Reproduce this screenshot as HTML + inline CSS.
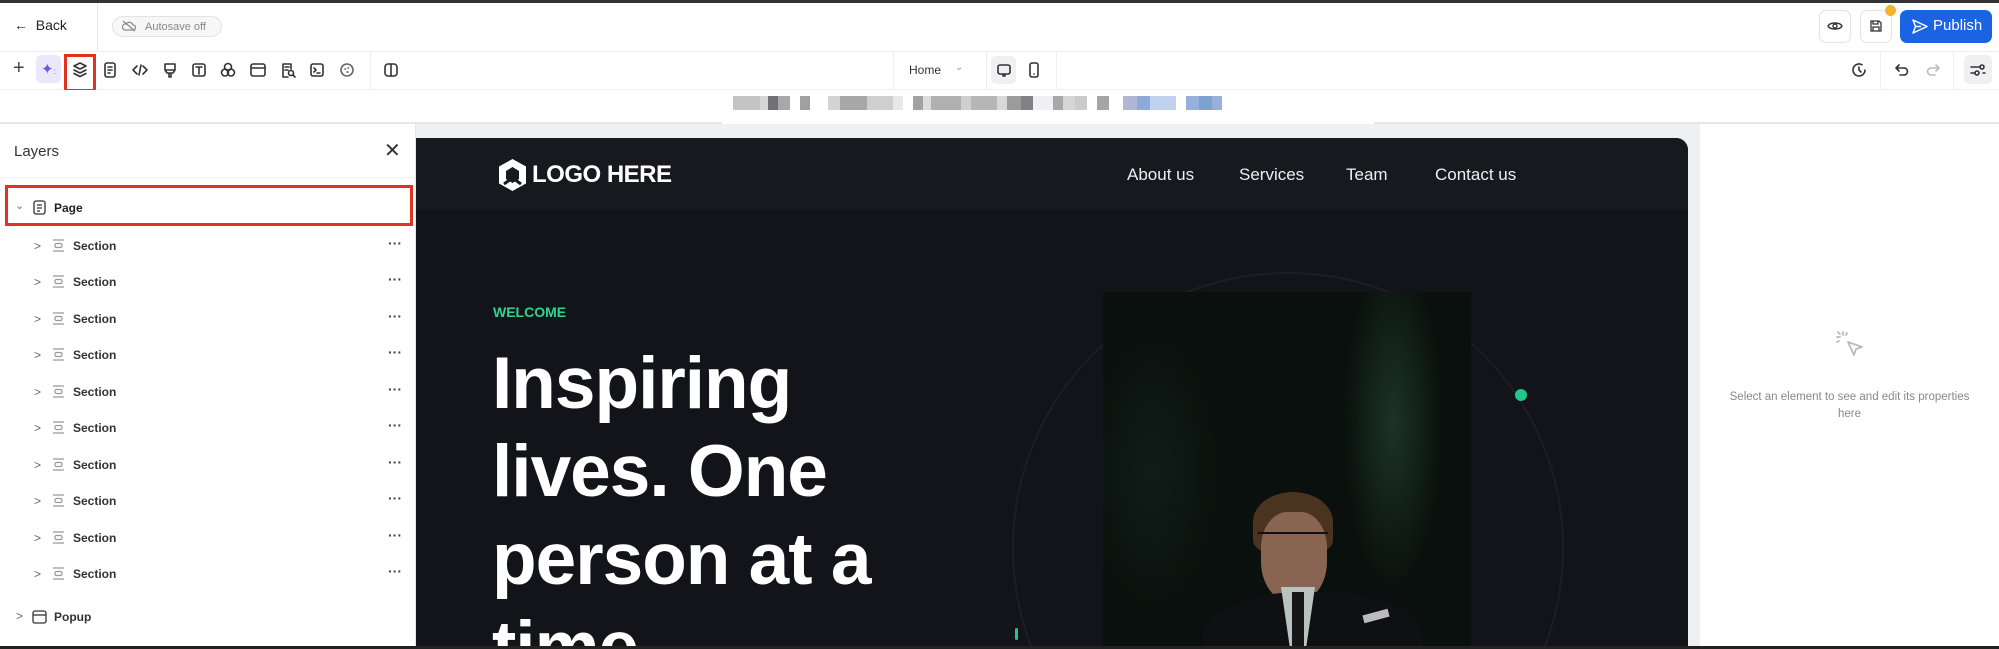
<!DOCTYPE html>
<html style="width:1999px;height:649px;overflow:hidden"><head><meta charset="utf-8"><style>
*{box-sizing:border-box;margin:0;padding:0}
body{width:1999px;height:649px;overflow:hidden;background:#fff;font-family:"Liberation Sans",sans-serif;position:relative;color:#222}
.abs{position:absolute}
.ic{position:absolute;width:18px;height:18px;top:61px}
.ic svg{width:18px;height:18px;fill:none;stroke:#333;stroke-width:1.6;stroke-linecap:round;stroke-linejoin:round}
.row{position:absolute;left:0;width:416px;height:36px;font-size:12px;font-weight:bold;color:#333}
.row .chev{position:absolute;left:34px;top:11px;color:#666;font-size:12px;font-weight:normal}
.row .si{position:absolute;left:52px;top:11px;width:13px;height:13px}
.row .t{position:absolute;left:73px;top:11px}
.row .dots{position:absolute;left:388px;top:7px;font-size:14px;color:#444}
.nav{position:absolute;top:165px;color:#eee;font-size:17px}
.hl{position:absolute;left:76px;color:#fff;font-weight:bold;font-size:73px;letter-spacing:-1px;white-space:nowrap}
</style></head><body>
<div class="abs" style="left:0;top:0;width:1999px;height:3px;background:#333"></div>
<div class="abs" style="left:14px;top:17px;font-size:14px;color:#222">&#8592;&nbsp; Back</div>
<div class="abs" style="left:97px;top:3px;width:1px;height:48px;background:#e6e6e6"></div>
<div class="abs" style="left:112px;top:16px;width:110px;height:21px;border:1px solid #e3e3e3;border-radius:11px;background:#f7f7f7;font-size:11px;color:#888;padding:4px 0 0 32px">Autosave off</div>
<svg class="abs" style="left:122px;top:20px" width="14" height="12" viewBox="0 0 14 12"><path d="M3 10h8a2.5 2.5 0 0 0 0-5 4 4 0 0 0-7-1A3 3 0 0 0 3 10zM1 1l12 10" fill="none" stroke="#888" stroke-width="1.2"/></svg>
<div class="abs" style="left:1819px;top:10px;width:32px;height:33px;border:1px solid #e3e3e3;border-radius:7px"></div>
<svg class="abs" style="left:1827px;top:19px" width="16" height="14" viewBox="0 0 16 14"><path d="M1 7c2-4 12-4 14 0c-2 4-12 4-14 0z" fill="none" stroke="#333" stroke-width="1.4"/><circle cx="8" cy="7" r="2" fill="none" stroke="#333" stroke-width="1.4"/></svg>
<div class="abs" style="left:1860px;top:10px;width:32px;height:33px;border:1px solid #e3e3e3;border-radius:7px"></div>
<svg class="abs" style="left:1869px;top:19px" width="14" height="14" viewBox="0 0 14 14"><path d="M2 2h8l2 2v8H2zM4 2v3h5V2M4 12V8h6v4" fill="none" stroke="#333" stroke-width="1.3"/></svg>
<div class="abs" style="left:1885px;top:5px;width:11px;height:11px;border-radius:50%;background:#f3b230"></div>
<div class="abs" style="left:1900px;top:10px;width:92px;height:33px;border-radius:7px;background:#1a63e3;color:#fff;font-size:15px;padding:7px 0 0 33px">Publish</div>
<svg class="abs" style="left:1911px;top:18px" width="18" height="17" viewBox="0 0 18 17"><path d="M2 2l14 6.5L2 15l2.5-6.5zM4.5 8.5H10" fill="none" stroke="#fff" stroke-width="1.5" stroke-linejoin="round"/></svg>
<div class="abs" style="left:0;top:51px;width:1999px;height:1px;background:#eee"></div>
<div class="abs" style="left:0;top:89px;width:1999px;height:1px;background:#eee"></div>
<div class="abs" style="left:13px;top:57px;font-size:20px;color:#444">+</div>
<div class="abs" style="left:36px;top:55px;width:25px;height:28px;border-radius:5px;background:#ece8fc;color:#7c4dea;font-size:15px;padding:5px 0 0 5px">&#10022;<span style="font-size:8px">:</span></div>
<div class="abs" style="left:64px;top:54px;width:32px;height:38px;border:3px solid #e0341e"></div>
<div class="ic" style="left:71px"><svg viewBox="0 0 18 18"><path d="M9 2l6 3-6 3-6-3zM3 9l6 3 6-3M3 12.5l6 3 6-3"/></svg></div>
<div class="ic" style="left:101px"><svg viewBox="0 0 18 18"><rect x="4" y="2" width="10" height="14" rx="2"/><path d="M7 6h4M7 9h4M7 12h2"/></svg></div>
<div class="ic" style="left:131px"><svg viewBox="0 0 18 18"><path d="M6 5l-4 4 4 4M12 5l4 4-4 4M10 4l-2 10"/></svg></div>
<div class="ic" style="left:161px"><svg viewBox="0 0 18 18"><path d="M4 3h10v6H4zM4 9l2 3h6l2-3M8 12v4h2v-4"/></svg></div>
<div class="ic" style="left:190px"><svg viewBox="0 0 18 18"><rect x="3" y="3" width="12" height="12" rx="2"/><path d="M6 6h6M9 6v7"/></svg></div>
<div class="ic" style="left:219px"><svg viewBox="0 0 18 18"><circle cx="9" cy="6" r="3.5"/><circle cx="6" cy="11.5" r="3.5"/><circle cx="12" cy="11.5" r="3.5"/></svg></div>
<div class="ic" style="left:249px"><svg viewBox="0 0 18 18"><rect x="2" y="3" width="14" height="12" rx="2"/><path d="M2 7h14"/></svg></div>
<div class="ic" style="left:279px"><svg viewBox="0 0 18 18"><path d="M12 8V3H4v13h5M6 6h4M6 9h3"/><circle cx="12" cy="12" r="2.5"/><path d="M14 14l2 2"/></svg></div>
<div class="ic" style="left:308px"><svg viewBox="0 0 18 18"><rect x="3" y="3" width="12" height="12" rx="2"/><path d="M6 7l2 2-2 2M9 12h3"/></svg></div>
<div class="ic" style="left:338px"><svg viewBox="0 0 18 18" style="stroke:#666"><circle cx="9" cy="9" r="6"/><path d="M7 8h.5M10 7h.5M9 11h1"/></svg></div>
<div class="abs" style="left:370px;top:51px;width:1px;height:38px;background:#eee"></div>
<div class="ic" style="left:382px"><svg viewBox="0 0 18 18"><rect x="3" y="3" width="12" height="12" rx="3"/><path d="M9 3v12"/></svg></div>
<div class="abs" style="left:893px;top:51px;width:1px;height:38px;background:#eee"></div>
<div class="abs" style="left:909px;top:63px;font-size:12px;color:#333">Home</div>
<div class="abs" style="left:955px;top:62px;font-size:10px;color:#999">&#8964;</div>
<div class="abs" style="left:986px;top:51px;width:1px;height:38px;background:#eee"></div>
<div class="abs" style="left:991px;top:56px;width:25px;height:28px;border-radius:5px;background:#f0f0f3"></div>
<div class="ic" style="left:995px"><svg viewBox="0 0 18 18"><rect x="3" y="4" width="12" height="9" rx="2"/><path d="M8 13v2h2v-2"/></svg></div>
<div class="ic" style="left:1025px"><svg viewBox="0 0 18 18"><rect x="5" y="2" width="8" height="14" rx="2"/><path d="M9 13h.1"/></svg></div>
<div class="abs" style="left:1056px;top:51px;width:1px;height:38px;background:#eee"></div>
<div class="ic" style="left:1850px"><svg viewBox="0 0 18 18"><path d="M15 9a6 6 0 1 1-3-5.2M9 6v3l2 2"/></svg></div>
<div class="abs" style="left:1880px;top:51px;width:1px;height:38px;background:#eee"></div>
<div class="ic" style="left:1893px"><svg viewBox="0 0 18 18"><path d="M6 4L3 7l3 3M3 7h8a3.5 3.5 0 0 1 0 7H7"/></svg></div>
<div class="ic" style="left:1924px"><svg viewBox="0 0 18 18" style="stroke:#bbb"><path d="M12 4l3 3-3 3M15 7H7a3.5 3.5 0 0 0 0 7h4"/></svg></div>
<div class="abs" style="left:1953px;top:51px;width:1px;height:38px;background:#eee"></div>
<div class="abs" style="left:1964px;top:55px;width:28px;height:29px;border-radius:5px;background:#f0f0f3"></div>
<div class="ic" style="left:1969px"><svg viewBox="0 0 18 18"><path d="M2 6h9M2 12h4M14 12h2"/><circle cx="13" cy="6" r="2"/><circle cx="8" cy="12" r="2"/></svg></div>
<div class="abs" style="left:0;top:90px;width:1999px;height:34px;background:#fff"></div>
<div class="abs" style="left:0;top:122px;width:722px;height:2px;background:#e6e8e8"></div>
<div class="abs" style="left:1374px;top:122px;width:625px;height:2px;background:#e6e8e8"></div>
<div class="abs" style="left:733px;top:96px;height:14px;display:flex">
<div style="width:27px;background:#c4c4c4"></div><div style="width:8px;background:#d6d6d6"></div><div style="width:10px;background:#707075"></div><div style="width:12px;background:#a8a8a8"></div><div style="width:10px"></div><div style="width:10px;background:#a0a0a0"></div><div style="width:18px"></div><div style="width:12px;background:#d3d3d3"></div><div style="width:27px;background:#a7a7a7"></div><div style="width:26px;background:#cfcfcf"></div><div style="width:10px;background:#e8e8e8"></div><div style="width:10px"></div><div style="width:10px;background:#a1a1a1"></div><div style="width:8px;background:#dcdcdc"></div><div style="width:30px;background:#b0b0b0"></div><div style="width:10px;background:#cfcfcf"></div><div style="width:26px;background:#b6b6b6"></div><div style="width:10px;background:#d8d8d8"></div><div style="width:14px;background:#9b9b9b"></div><div style="width:12px;background:#808085"></div><div style="width:20px;background:#f0f0f2"></div><div style="width:10px;background:#a8a8a8"></div><div style="width:12px;background:#d6d6d6"></div><div style="width:12px;background:#cacaca"></div><div style="width:10px"></div><div style="width:12px;background:#a5a5a5"></div><div style="width:14px"></div><div style="width:14px;background:#afb7d2"></div><div style="width:13px;background:#8fa9d9"></div><div style="width:26px;background:#c0d2ee"></div><div style="width:10px"></div><div style="width:13px;background:#98b0d9"></div><div style="width:13px;background:#7ea0d2"></div><div style="width:10px;background:#98b1dc"></div>
</div>
<div class="abs" style="left:416px;top:124px;width:1272px;height:525px;background:#eef1f1"></div>
<div class="abs" style="left:416px;top:138px;width:1272px;height:511px;background:#131419;border-radius:0 12px 0 0;overflow:hidden">
<div class="abs" style="left:0;top:0;width:1272px;height:72px;background:#18191e"></div>
<svg class="abs" style="left:80px;top:19px" width="33" height="36" viewBox="0 0 33 36"><path d="M16.5 2L30 9.5v17L16.5 34 3 26.5v-17z" fill="#fff"/><path d="M16.5 10L23 14v8l-6.5 4-6.5-4v-8z" fill="#18191e"/><path d="M8 27l8.5-6 8.5 6" fill="none" stroke="#18191e" stroke-width="3"/></svg>
<div class="abs" style="left:116px;top:23px;color:#fff;font-weight:bold;font-size:24px;letter-spacing:-0.5px">LOGO HERE</div>
<div class="nav" style="left:711px;top:27px">About us</div>
<div class="nav" style="left:823px;top:27px">Services</div>
<div class="nav" style="left:930px;top:27px">Team</div>
<div class="nav" style="left:1019px;top:27px">Contact us</div>
<svg class="abs" style="left:0;top:72px" width="1272" height="439"><circle cx="872" cy="338" r="275" fill="none" stroke="#1c1e23" stroke-width="2"/><circle cx="1105" cy="185" r="6" fill="#1fc98a"/><rect x="599" y="418" width="3" height="12" rx="1.5" fill="#1fc98a"/></svg>
<div class="abs" style="left:77px;top:166px;color:#2fd48f;font-weight:bold;font-size:14px">WELCOME</div>
<div class="hl" style="top:204px">Inspiring</div>
<div class="hl" style="top:292px">lives. One</div>
<div class="hl" style="top:380px">person at a</div>
<div class="hl" style="top:468px">time</div>
<div class="abs" style="left:687px;top:154px;width:368px;height:357px;overflow:hidden;background:radial-gradient(ellipse 50px 170px at 290px 130px,#1c3329,transparent),radial-gradient(ellipse 70px 150px at 50px 180px,#0f1d18,transparent),#0a100d">
<div class="abs" style="left:150px;top:200px;width:80px;height:60px;border-radius:50% 50% 20% 20%;background:#4a3420"></div>
<div class="abs" style="left:158px;top:220px;width:66px;height:90px;border-radius:40% 40% 45% 45%;background:#8a6452"></div>
<div class="abs" style="left:155px;top:240px;width:70px;height:14px;border-top:2px solid #111"></div>
<div class="abs" style="left:100px;top:300px;width:220px;height:100px;border-radius:45% 45% 0 0;background:#0e1013"></div>
<div class="abs" style="left:178px;top:295px;width:34px;height:70px;background:#b8c2bf;clip-path:polygon(0 0,100% 0,70% 100%,30% 100%)"></div>
<div class="abs" style="left:189px;top:300px;width:12px;height:60px;background:#161616"></div>
<div class="abs" style="left:260px;top:320px;width:26px;height:8px;background:#bbb;transform:rotate(-15deg)"></div>
</div>
</div>
<div class="abs" style="left:1688px;top:124px;width:311px;height:525px;background:#fff"></div>
<div class="abs" style="left:1688px;top:124px;width:12px;height:525px;background:#eef1f1"></div>
<svg class="abs" style="left:1834px;top:330px" width="34" height="34" viewBox="0 0 34 34"><path d="M14 12l14 5-6 2-2 6z" fill="none" stroke="#bbb" stroke-width="1.8" stroke-linejoin="round"/><path d="M9 2v3M3 7h3M4 2l2 2M13 3l-1 2M3 12l2-1" stroke="#bbb" stroke-width="1.8" stroke-linecap="round"/></svg>
<div class="abs" style="left:1700px;top:389px;width:299px;text-align:center;font-size:11.5px;color:#888;line-height:17px">Select an element to see and edit its properties<br>here</div>
<div class="abs" style="left:0;top:124px;width:416px;height:525px;background:#fff;border-right:1px solid #e6e6e6"></div>
<div class="abs" style="left:14px;top:143px;font-size:15px;color:#333">Layers</div>
<div class="abs" style="left:384px;top:138px;font-size:20px;color:#333">&#10005;</div>
<div class="abs" style="left:0;top:177px;width:416px;height:1px;background:#eee"></div>
<div class="abs" style="left:5px;top:185px;width:408px;height:41px;border:3px solid #e0341e"></div>
<div class="abs" style="left:15px;top:199px;font-size:11px;color:#777">&#8964;</div>
<svg class="abs" style="left:33px;top:200px" width="13" height="15" viewBox="0 0 13 15"><rect x="1" y="1" width="11" height="13" rx="2" fill="none" stroke="#333" stroke-width="1.3"/><path d="M4 5h5M4 8h5M4 11h3" stroke="#333" stroke-width="1.2"/></svg>
<div class="abs" style="left:54px;top:201px;font-size:12px;font-weight:bold;color:#222">Page</div>
<div class="row" style="top:228px"><span class="chev">&gt;</span><svg class="si" viewBox="0 0 13 13"><path d="M1 1h11M1 12h11" stroke="#999" stroke-width="1.2"/><rect x="3" y="4.5" width="7" height="4" rx="1.5" fill="none" stroke="#999" stroke-width="1.2"/></svg><span class="t">Section</span><span class="dots">&middot;&middot;&middot;</span></div>
<div class="row" style="top:264px"><span class="chev">&gt;</span><svg class="si" viewBox="0 0 13 13"><path d="M1 1h11M1 12h11" stroke="#999" stroke-width="1.2"/><rect x="3" y="4.5" width="7" height="4" rx="1.5" fill="none" stroke="#999" stroke-width="1.2"/></svg><span class="t">Section</span><span class="dots">&middot;&middot;&middot;</span></div>
<div class="row" style="top:301px"><span class="chev">&gt;</span><svg class="si" viewBox="0 0 13 13"><path d="M1 1h11M1 12h11" stroke="#999" stroke-width="1.2"/><rect x="3" y="4.5" width="7" height="4" rx="1.5" fill="none" stroke="#999" stroke-width="1.2"/></svg><span class="t">Section</span><span class="dots">&middot;&middot;&middot;</span></div>
<div class="row" style="top:337px"><span class="chev">&gt;</span><svg class="si" viewBox="0 0 13 13"><path d="M1 1h11M1 12h11" stroke="#999" stroke-width="1.2"/><rect x="3" y="4.5" width="7" height="4" rx="1.5" fill="none" stroke="#999" stroke-width="1.2"/></svg><span class="t">Section</span><span class="dots">&middot;&middot;&middot;</span></div>
<div class="row" style="top:374px"><span class="chev">&gt;</span><svg class="si" viewBox="0 0 13 13"><path d="M1 1h11M1 12h11" stroke="#999" stroke-width="1.2"/><rect x="3" y="4.5" width="7" height="4" rx="1.5" fill="none" stroke="#999" stroke-width="1.2"/></svg><span class="t">Section</span><span class="dots">&middot;&middot;&middot;</span></div>
<div class="row" style="top:410px"><span class="chev">&gt;</span><svg class="si" viewBox="0 0 13 13"><path d="M1 1h11M1 12h11" stroke="#999" stroke-width="1.2"/><rect x="3" y="4.5" width="7" height="4" rx="1.5" fill="none" stroke="#999" stroke-width="1.2"/></svg><span class="t">Section</span><span class="dots">&middot;&middot;&middot;</span></div>
<div class="row" style="top:447px"><span class="chev">&gt;</span><svg class="si" viewBox="0 0 13 13"><path d="M1 1h11M1 12h11" stroke="#999" stroke-width="1.2"/><rect x="3" y="4.5" width="7" height="4" rx="1.5" fill="none" stroke="#999" stroke-width="1.2"/></svg><span class="t">Section</span><span class="dots">&middot;&middot;&middot;</span></div>
<div class="row" style="top:483px"><span class="chev">&gt;</span><svg class="si" viewBox="0 0 13 13"><path d="M1 1h11M1 12h11" stroke="#999" stroke-width="1.2"/><rect x="3" y="4.5" width="7" height="4" rx="1.5" fill="none" stroke="#999" stroke-width="1.2"/></svg><span class="t">Section</span><span class="dots">&middot;&middot;&middot;</span></div>
<div class="row" style="top:520px"><span class="chev">&gt;</span><svg class="si" viewBox="0 0 13 13"><path d="M1 1h11M1 12h11" stroke="#999" stroke-width="1.2"/><rect x="3" y="4.5" width="7" height="4" rx="1.5" fill="none" stroke="#999" stroke-width="1.2"/></svg><span class="t">Section</span><span class="dots">&middot;&middot;&middot;</span></div>
<div class="row" style="top:556px"><span class="chev">&gt;</span><svg class="si" viewBox="0 0 13 13"><path d="M1 1h11M1 12h11" stroke="#999" stroke-width="1.2"/><rect x="3" y="4.5" width="7" height="4" rx="1.5" fill="none" stroke="#999" stroke-width="1.2"/></svg><span class="t">Section</span><span class="dots">&middot;&middot;&middot;</span></div>
<div class="abs" style="left:16px;top:609px;font-size:12px;color:#666">&gt;</div>
<svg class="abs" style="left:32px;top:610px" width="15" height="14" viewBox="0 0 15 14"><rect x="1" y="1" width="13" height="12" rx="2" fill="none" stroke="#333" stroke-width="1.3"/><path d="M1 5h13" stroke="#333" stroke-width="1.3"/></svg>
<div class="abs" style="left:54px;top:610px;font-size:12px;font-weight:bold;color:#333">Popup</div>
<div class="abs" style="left:0;top:646px;width:1999px;height:3px;background:#222"></div>
</body></html>
